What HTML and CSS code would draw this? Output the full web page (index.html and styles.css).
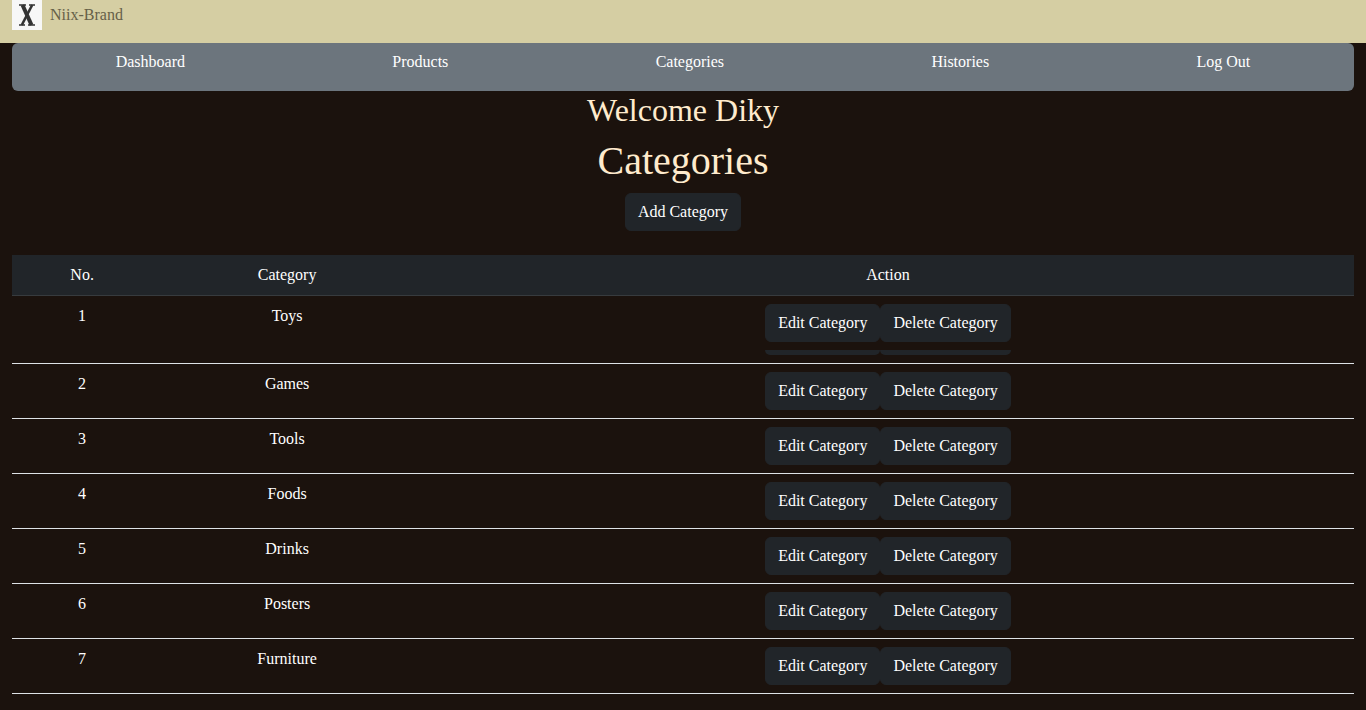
FILE: index.html
```html
<!DOCTYPE html>
<html lang="en">
<head>
<meta charset="utf-8">
<meta name="viewport" content="width=device-width, initial-scale=1">
<title>Categories</title>
<link rel="stylesheet" href="styles.css">
</head>
<body>
<header class="brand-bar">
  <a class="brand" href="#">
    <svg class="brand-logo" viewBox="0 0 30 30" aria-hidden="true">
      <rect width="30" height="30" fill="#f7f7f7"/>
      <g fill="none" stroke="#333">
        <path d="M10.500 5L19.500 25" stroke-width="4"/>
        <path d="M20.200 5L9.800 25" stroke-width="2.600"/>
        <path d="M7 5H14M17 5H23M7 25H13M16 25H23" stroke-width="1.400"/>
      </g>
    </svg>
    <span>Niix-Brand</span>
  </a>
</header>
<div class="container">
  <nav class="main-nav">
    <a href="#">Dashboard</a>
    <a href="#">Products</a>
    <a href="#">Categories</a>
    <a href="#">Histories</a>
    <a href="#">Log Out</a>
  </nav>
  <main class="content">
    <h2 class="welcome">Welcome Diky</h2>
    <h1 class="title">Categories</h1>
    <button class="btn" type="button">Add Category</button>
    <table class="table">
      <colgroup><col class="col-number"><col class="col-category"><col></colgroup>
      <thead>
        <tr><th scope="col">No.</th><th scope="col">Category</th><th scope="col">Action</th></tr>
      </thead>
      <tbody>
        <tr><td>1</td><td>Toys</td><td><div class="actions"><button class="btn" type="button">Edit Category</button><button class="btn" type="button">Delete Category</button></div><div class="actions-edge"><div class="edge edge-edit"></div><div class="edge edge-delete"></div></div></td></tr>
        <tr><td>2</td><td>Games</td><td><div class="actions"><button class="btn" type="button">Edit Category</button><button class="btn" type="button">Delete Category</button></div></td></tr>
        <tr><td>3</td><td>Tools</td><td><div class="actions"><button class="btn" type="button">Edit Category</button><button class="btn" type="button">Delete Category</button></div></td></tr>
        <tr><td>4</td><td>Foods</td><td><div class="actions"><button class="btn" type="button">Edit Category</button><button class="btn" type="button">Delete Category</button></div></td></tr>
        <tr><td>5</td><td>Drinks</td><td><div class="actions"><button class="btn" type="button">Edit Category</button><button class="btn" type="button">Delete Category</button></div></td></tr>
        <tr><td>6</td><td>Posters</td><td><div class="actions"><button class="btn" type="button">Edit Category</button><button class="btn" type="button">Delete Category</button></div></td></tr>
        <tr><td>7</td><td>Furniture</td><td><div class="actions"><button class="btn" type="button">Edit Category</button><button class="btn" type="button">Delete Category</button></div></td></tr>
      </tbody>
    </table>
  </main>
</div>
</body>
</html>
```
FILE: styles.css
```css
*, *::before, *::after {
  box-sizing: border-box;
}

body {
  margin: 0;
  background: #1b120d;
  color: #fff;
  font: 16px/24px "Liberation Serif", "Times New Roman", serif;
}

.brand-bar {
  padding: 0 12px 13px;
  background: #d5cea3;
}

.brand {
  display: inline-flex;
  align-items: center;
  gap: 8px;
  vertical-align: top;
  color: #666048;
  text-decoration: none;
}

.brand-logo {
  display: block;
  width: 30px;
  height: 30px;
}

.container {
  padding: 0 12px;
}

.main-nav {
  display: flex;
  justify-content: space-around;
  padding: 7px 0 17px;
  border-radius: 6px;
  background: #6c757d;
}

.main-nav a {
  color: #fff;
  text-decoration: none;
}

.content {
  text-align: center;
}

.welcome,
.title {
  margin: 0 0 8px;
  color: #ffebcd;
  font-weight: 400;
}

.welcome {
  font-size: 32px;
  line-height: 38px;
}

.title {
  font-size: 40px;
  line-height: 48px;
}

.btn {
  padding: 6px 12px;
  border: 1px solid #212529;
  border-radius: 6px;
  background: #212529;
  color: #fff;
  font: inherit;
  vertical-align: top;
  cursor: pointer;
}

.table {
  width: 100%;
  margin: 24px 0 16px;
  border-collapse: separate;
  border-spacing: 0;
  table-layout: fixed;
}

.col-number {
  width: 10.45%;
}

.col-category {
  width: 20.1%;
}

.table th,
.table td {
  padding: 8px;
  border-bottom: 1px solid #dee2e6;
  font-weight: 400;
  vertical-align: top;
}

.table th {
  border-bottom-color: #373b3e;
  background: #212529;
}

.actions {
  display: flex;
  justify-content: center;
}

.actions-edge {
  display: flex;
  justify-content: center;
  margin-top: 8px;
}

.edge {
  height: 5px;
  border-radius: 0 0 6px 6px;
  background: #212529;
}

.edge-edit {
  width: 115px;
}

.edge-delete {
  width: 131px;
}
```
